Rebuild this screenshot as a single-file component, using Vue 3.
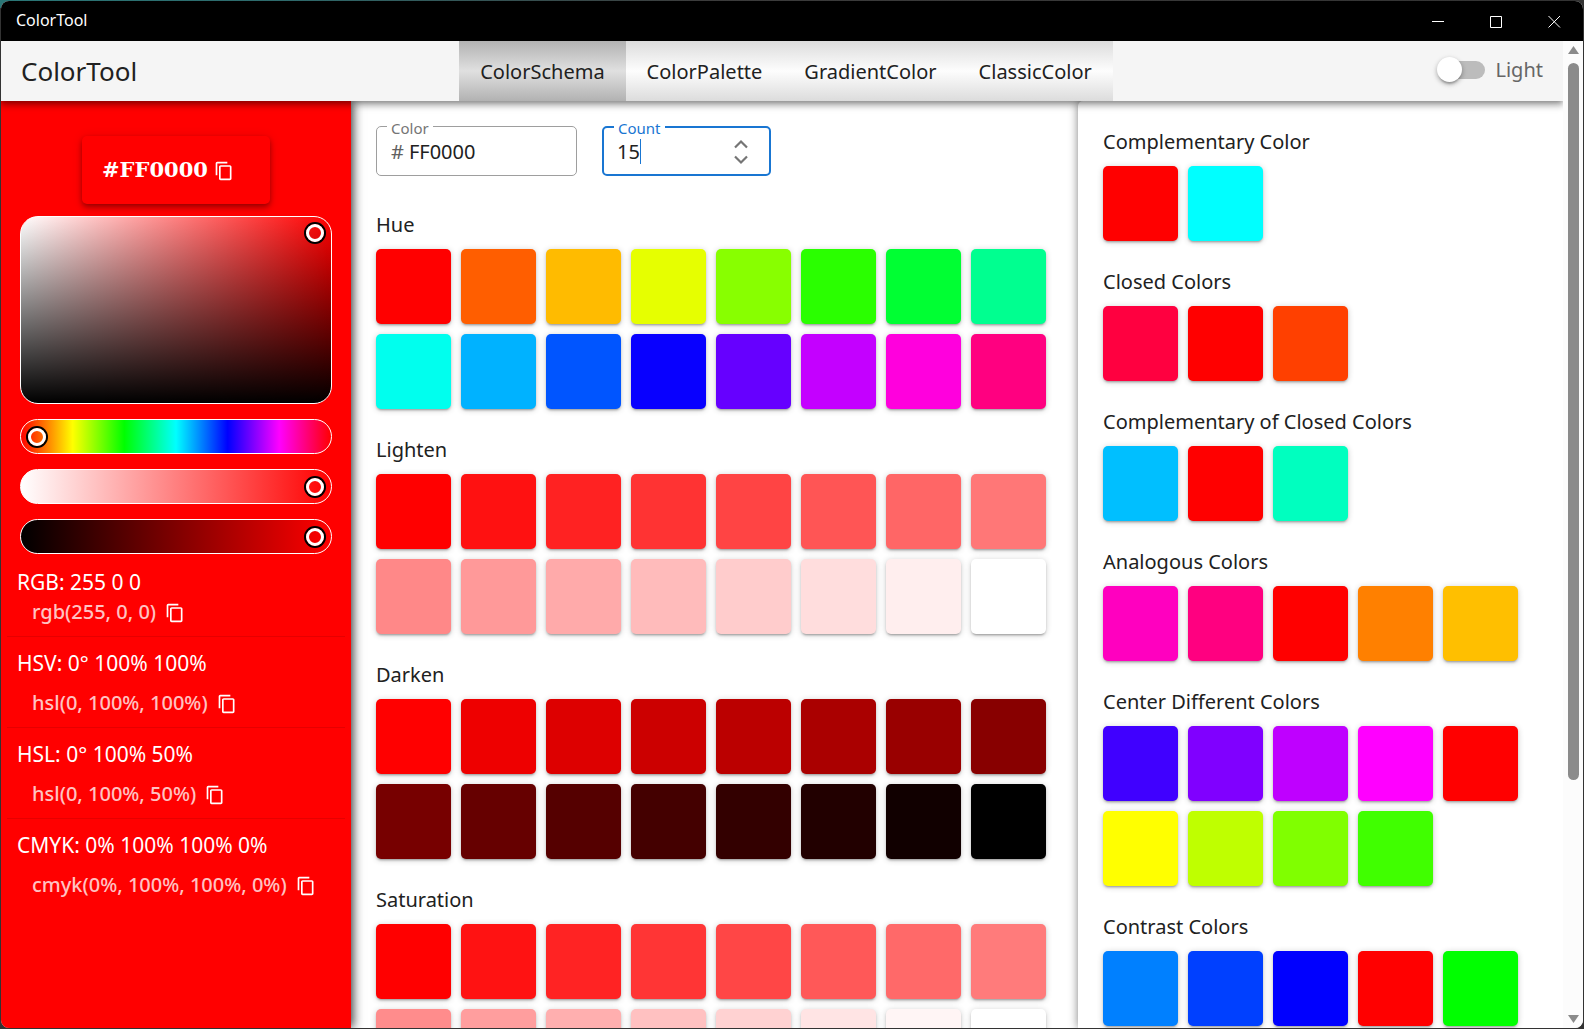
<script setup>
import { ref, computed } from 'vue'

const tabs = ['ColorSchema', 'ColorPalette', 'GradientColor', 'ClassicColor']
const activeTab = ref('ColorSchema')
const color = ref('FF0000')
const count = ref('15')
const dark = ref(false)

const sliders = [
  { name: 'Hue', kind: 'hue', value: 0 },
  { name: 'Saturation', kind: 'saturation', value: 100 },
  { name: 'Brightness', kind: 'brightness', value: 100 },
]

const formats = [
  { title: 'RGB: 255 0 0', code: 'rgb(255, 0, 0)', compact: true },
  { title: 'HSV: 0° 100% 100%', code: 'hsl(0, 100%, 100%)' },
  { title: 'HSL: 0° 100% 50%', code: 'hsl(0, 100%, 50%)' },
  { title: 'CMYK: 0% 100% 100% 0%', code: 'cmyk(0%, 100%, 100%, 0%)' },
]

const ramp = (fn) => Array.from({ length: (Number(count.value) || 0) + 1 }, (_, i) => fn(i))
const tint = (step) => (i) => {
  const v = Math.min(255, Math.round(i * step))
  return `rgb(255, ${v}, ${v})`
}

const schemes = computed(() => [
  { name: 'Hue', colors: ramp((i) => `hsl(${i * 22}, 100%, 50%)`) },
  { name: 'Lighten', colors: ramp(tint(17)) },
  { name: 'Darken', colors: ramp((i) => `rgb(${255 - i * 17}, 0, 0)`) },
  { name: 'Saturation', colors: ramp(tint(17.5)) },
])

const harmonies = [
  { name: 'Complementary Color', colors: ['#ff0000', '#00ffff'] },
  { name: 'Closed Colors', colors: ['#ff0040', '#ff0000', '#ff4000'] },
  { name: 'Complementary of Closed Colors', colors: ['#00bfff', '#ff0000', '#00ffbf'] },
  { name: 'Analogous Colors', colors: ['#ff00bf', '#ff0080', '#ff0000', '#ff8000', '#ffbf00'] },
  {
    name: 'Center Different Colors',
    colors: ['#4000ff', '#8000ff', '#bf00ff', '#ff00ff', '#ff0000', '#ffff00', '#bfff00', '#80ff00', '#40ff00'],
  },
  { name: 'Contrast Colors', colors: ['#0080ff', '#0040ff', '#0000ff', '#ff0000', '#00ff00'] },
]

const copyPath =
  'M16 1H4c-1.1 0-2 .9-2 2v14h2V3h12V1zm3 4H8c-1.1 0-2 .9-2 2v14c0 1.1.9 2 2 2h11c1.1 0 2-.9 2-2V7c0-1.1-.9-2-2-2zm0 16H8V7h11v14z'
</script>

<template>
  <div class="desktop">
    <div class="window">
      <div class="titlebar">
        <span class="caption">ColorTool</span>
        <div class="window-buttons">
          <button type="button" aria-label="Minimize">
            <svg width="13" height="13" viewBox="0 0 13 13"><path d="M0 6.5H12" /></svg>
          </button>
          <button type="button" aria-label="Maximize">
            <svg width="13" height="13" viewBox="0 0 13 13"><path d="M.5 1.5H11.5V12.5H.5Z" /></svg>
          </button>
          <button type="button" aria-label="Close">
            <svg width="13" height="13" viewBox="0 0 13 13"><path d="M.5 1L12 12.5M12 1L.5 12.5" /></svg>
          </button>
        </div>
      </div>

      <div class="view">
        <div class="page">
          <header class="toolbar">
            <h1 class="brand">ColorTool</h1>
            <nav class="tabs">
              <button
                v-for="tab in tabs"
                :key="tab"
                type="button"
                class="tab"
                :class="{ active: tab === activeTab }"
                @click="activeTab = tab"
              >
                {{ tab }}
              </button>
            </nav>
            <div class="theme">
              <label class="toggle">
                <input v-model="dark" type="checkbox" class="switch" />
                <span>Light</span>
              </label>
            </div>
          </header>

          <main class="columns">
            <aside class="picker">
              <div class="hex-card">
                <span>#FF0000</span>
                <button type="button" class="copy" aria-label="Copy hex value">
                  <svg viewBox="0 0 24 24"><path :d="copyPath" /></svg>
                </button>
              </div>
              <div class="spectrum"><span class="handle"></span></div>
              <input
                v-for="slider in sliders"
                :key="slider.kind"
                v-model="slider.value"
                type="range"
                class="slider"
                :class="slider.kind"
                :aria-label="slider.name"
              />
              <ul class="formats">
                <li v-for="format in formats" :key="format.title" :class="{ compact: format.compact }">
                  <div class="format-title">{{ format.title }}</div>
                  <div class="format-code">
                    <span>{{ format.code }}</span>
                    <button type="button" class="copy" :aria-label="'Copy ' + format.code">
                      <svg viewBox="0 0 24 24"><path :d="copyPath" /></svg>
                    </button>
                  </div>
                </li>
              </ul>
            </aside>

            <section class="schemes">
              <div class="fields">
                <div class="field">
                  <label for="color">Color</label>
                  <span class="prefix">#</span>
                  <input id="color" v-model="color" type="text" class="color-input" />
                </div>
                <div class="field focused">
                  <label for="count">Count</label>
                  <input id="count" v-model="count" type="text" inputmode="numeric" class="count-input" />
                  <span class="caret"></span>
                  <div class="stepper">
                    <button type="button" aria-label="Increase count" @click="count = String(+count + 1)">
                      <svg width="16" height="10" viewBox="0 0 16 10"><path d="M2 8.5L8 2.5L14 8.5" /></svg>
                    </button>
                    <button type="button" aria-label="Decrease count" @click="count = String(+count - 1)">
                      <svg width="16" height="10" viewBox="0 0 16 10"><path d="M2 1.5L8 7.5L14 1.5" /></svg>
                    </button>
                  </div>
                </div>
              </div>
              <div v-for="group in schemes" :key="group.name" class="group">
                <h2>{{ group.name }}</h2>
                <div class="swatches">
                  <button
                    v-for="(c, i) in group.colors"
                    :key="i"
                    type="button"
                    class="swatch"
                    :style="{ background: c }"
                    :aria-label="c"
                  ></button>
                </div>
              </div>
            </section>

            <section class="harmonies">
              <div v-for="group in harmonies" :key="group.name" class="group">
                <h2>{{ group.name }}</h2>
                <div class="swatches">
                  <button
                    v-for="(c, i) in group.colors"
                    :key="i"
                    type="button"
                    class="swatch"
                    :style="{ background: c }"
                    :aria-label="c"
                  ></button>
                </div>
              </div>
            </section>
          </main>
        </div>

        <div class="scrollbar" aria-hidden="true">
          <svg width="11" height="8" viewBox="0 0 11 8"><path d="M5.500 0L11 8H0Z" /></svg>
          <div class="track"><div class="thumb"></div></div>
          <svg width="11" height="8" viewBox="0 0 11 8"><path d="M0 0H11L5.500 8Z" /></svg>
        </div>
      </div>
    </div>
  </div>
</template>

<style>
html,
body {
  margin: 0;
  background: #1e1e1e;
}
</style>

<style scoped>
* {
  box-sizing: border-box;
}

button {
  padding: 0;
  border: 0;
  background: none;
  color: inherit;
  font: inherit;
}

.desktop {
  height: 100vh;
  padding: 1px;
  background: linear-gradient(90deg, #2a7676, #2e6a6c 18%, #3c3c3c 44%, #333333);
  background-size: 100% 8px;
  background-repeat: no-repeat;
  background-color: #333333;
  font-family: "Noto Sans", "Open Sans", sans-serif;
  font-size: 20px;
  line-height: 30px;
  color: #212121;
}

.window {
  display: flex;
  flex-direction: column;
  height: 100%;
  overflow: hidden;
  border-radius: 8px;
  background: #ffffff;
}

.titlebar {
  display: flex;
  flex: none;
  align-items: center;
  justify-content: space-between;
  height: 40px;
  padding: 0 0 3px 15px;
  background: #000000;
  color: #ffffff;
  font-size: 16px;
}

.window-buttons {
  display: flex;
  height: 40px;
  padding-top: 3px;
}

.window-buttons button {
  display: flex;
  align-items: center;
  justify-content: center;
  width: 58px;
}

.window-buttons svg {
  fill: none;
  stroke: #ffffff;
}

.view {
  display: flex;
  flex: 1;
  min-height: 0;
}

.page {
  display: flex;
  flex: 1;
  flex-direction: column;
  min-width: 0;
  overflow: hidden;
}

.toolbar {
  position: relative;
  z-index: 2;
  display: flex;
  flex: none;
  height: 60px;
  background: #f5f5f5;
  box-shadow:
    0 2px 5px -1px rgba(0, 0, 0, 0.3),
    0 5px 6px rgba(0, 0, 0, 0.2),
    0 1px 12px rgba(0, 0, 0, 0.16);
}

.brand {
  flex: 1 1 0;
  margin: 0;
  padding: 0 8px 0 20px;
  font-size: 26px;
  font-weight: 400;
  line-height: 60px;
}

.tabs {
  display: flex;
}

.tab {
  padding: 2px 21px 0;
  background: linear-gradient(#dcdcdc, #fdfdfd 50%, #dcdcdc);
}

.tab.active {
  background: linear-gradient(#b2b2b2, #e0e0e0 50%, #b2b2b2);
}

.theme {
  display: flex;
  flex: 1 1 0;
  align-items: center;
  justify-content: flex-end;
  padding: 0 20px 3px 0;
}

.toggle {
  display: flex;
  align-items: center;
  gap: 10px;
  color: #666666;
}

.switch {
  position: relative;
  width: 48px;
  height: 25px;
  margin: 0;
  appearance: none;
}

.switch::before {
  position: absolute;
  top: 4px;
  right: 0;
  width: 36px;
  height: 18px;
  border-radius: 9px;
  background: #bcbcbc;
  content: '';
}

.switch::after {
  position: absolute;
  top: 0;
  left: 0;
  width: 25px;
  height: 25px;
  border-radius: 50%;
  background: #ffffff;
  box-shadow:
    0 4px 2px -2px rgba(0, 0, 0, 0.2),
    0 2px 4px rgba(0, 0, 0, 0.2),
    0 2px 6px rgba(0, 0, 0, 0.14);
  content: '';
}

.switch:checked::after {
  right: 0;
  left: auto;
}

.columns {
  display: flex;
  flex: 1;
  min-height: 0;
}

.picker {
  position: relative;
  z-index: 1;
  display: flex;
  flex: 0 0 350px;
  flex-direction: column;
  padding: 35px 6px 0;
  background: #ff0000;
  box-shadow: 2px 0 10px rgba(0, 0, 0, 0.8);
  color: #ffffff;
}

.hex-card {
  display: flex;
  align-items: center;
  align-self: center;
  gap: 6px;
  width: 188px;
  height: 68px;
  margin-bottom: 12px;
  padding: 0 20px;
  border-radius: 5px;
  box-shadow:
    0 2px 5px -1px rgba(0, 0, 0, 0.25),
    0 4px 6px rgba(0, 0, 0, 0.2),
    0 1px 12px rgba(0, 0, 0, 0.12);
  font-family: "DejaVu Serif", serif;
  font-size: 21px;
  font-weight: 700;
}

.copy {
  display: flex;
  align-items: center;
  padding-top: 2px;
}

.copy svg {
  width: 20px;
  height: 20px;
  fill: #ffffff;
}

.spectrum {
  position: relative;
  height: 188px;
  margin: 0 13px;
  border: 1px solid #ffffff;
  border-radius: 18px;
  background: linear-gradient(to top, #000000, transparent), linear-gradient(to right, #ffffff, #ff0000);
}

.handle {
  position: absolute;
  top: 7px;
  right: 7px;
  width: 18px;
  height: 18px;
  border: 3px solid #ffffff;
  border-radius: 50%;
  box-shadow: 0 0 0 2px #000000;
}

.slider {
  height: 35px;
  margin: 15px 13px 0;
  padding: 0 7px;
  border: 1px solid #ffffff;
  border-radius: 18px;
  appearance: none;
}

.slider::-webkit-slider-thumb {
  width: 18px;
  height: 18px;
  border: 3px solid #ffffff;
  border-radius: 50%;
  box-shadow: 0 0 0 2px #000000;
  appearance: none;
}

.hue {
  background: linear-gradient(to right, #ff0000, #ffff00, #00ff00, #00ffff, #0000ff, #ff00ff, #ff0000);
}

.saturation {
  background: linear-gradient(to right, #ffffff, #ff0000);
}

.brightness {
  background: linear-gradient(to right, #000000, #ff0000);
}

.formats {
  margin: 13px 0 0;
  padding: 0;
  list-style: none;
}

.formats li {
  display: flex;
  flex-direction: column;
  gap: 10px;
  padding: 11px 10px 9px;
  border-top: 1px solid #e60000;
}

.formats .compact {
  gap: 0;
  padding-top: 0;
  border-top: 0;
}

.format-title {
  font-size: 21px;
}

.format-code {
  display: flex;
  gap: 9px;
  padding-left: 15px;
}

.format-code span {
  color: #ffc2c2;
  font-weight: 500;
}

.schemes {
  flex: 1;
  min-width: 0;
  padding: 25px 24px 0 25px;
}

.fields {
  display: flex;
  gap: 25px;
  margin-bottom: 8px;
}

.field {
  position: relative;
  display: flex;
  align-items: center;
  width: 201px;
  height: 50px;
  padding: 1px 14px 0;
  border: 1px solid #9e9e9e;
  border-radius: 5px;
}

.field label {
  position: absolute;
  top: -9px;
  left: 10px;
  padding: 0 4px;
  background: #ffffff;
  color: #757575;
  font-size: 15px;
  line-height: 20px;
}

.field input {
  padding: 0;
  border: 0;
  outline: 0;
  background: none;
  color: inherit;
  font: inherit;
}

.prefix {
  margin-right: 5px;
  color: #616161;
}

.color-input {
  min-width: 0;
  flex: 1;
}

.count-input {
  width: 23px;
}

.field.focused {
  width: 169px;
  padding: 1px 20px 0 13px;
  border: 2px solid #1976d2;
}

.focused label {
  top: -10px;
  color: #1976d2;
}

.caret {
  width: 1px;
  height: 25px;
  background: #1976d2;
}

.stepper {
  display: flex;
  flex-direction: column;
  gap: 6px;
  margin-left: auto;
}

.stepper button {
  display: flex;
}

.stepper svg {
  fill: none;
  stroke: #757575;
  stroke-width: 2.2;
}

.group {
  padding-top: 26px;
}

.group h2 {
  margin: 0 0 9px;
  font-size: 20px;
  font-weight: 400;
  line-height: 30px;
}

.swatches {
  display: flex;
  flex-wrap: wrap;
  gap: 10px;
}

.swatch {
  width: 75px;
  height: 75px;
  border-radius: 5px;
  box-shadow:
    0 1px 6px rgba(0, 0, 0, 0.2),
    0 2px 2px rgba(0, 0, 0, 0.14),
    0 3px 1px -2px rgba(0, 0, 0, 0.12);
}

.harmonies {
  flex: 0 0 485px;
  padding: 0 25px;
  border-top-left-radius: 5px;
  background: #ffffff;
  box-shadow: 0 0 10px rgba(0, 0, 0, 0.5);
}

.scrollbar {
  display: flex;
  flex: 0 0 20px;
  flex-direction: column;
  align-items: center;
  gap: 9px;
  padding: 5px 0;
  background: #fcfcfc;
}

.scrollbar svg {
  flex: none;
  fill: #8b8b8b;
}

.track {
  flex: 1;
}

.thumb {
  width: 11px;
  height: 76%;
  border-radius: 6px;
  background: #8b8b8b;
}
</style>
